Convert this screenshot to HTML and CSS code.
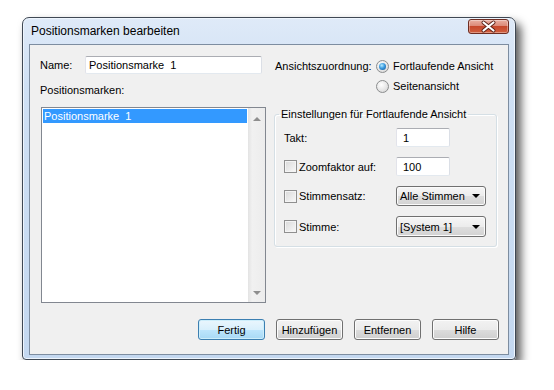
FILE: index.html
```html
<!DOCTYPE html>
<html>
<head>
  <title>Positionsmarken bearbeiten</title>
  <link rel="stylesheet" href="styles.css">
</head>
<body>
  <div class="window">
    <div class="titlebar">
      <span class="title">Positionsmarken bearbeiten</span>
      <div class="close">
        <svg width="41" height="15" viewBox="0 0 41 15">
          <path d="M15.5 3.5 L25.5 11.5 M25.5 3.5 L15.5 11.5" stroke="#5a1f15" stroke-width="4" stroke-linecap="round"/>
          <path d="M15.5 3.5 L25.5 11.5 M25.5 3.5 L15.5 11.5" stroke="#fff" stroke-width="2.2" stroke-linecap="round"/>
        </svg>
      </div>
    </div>

    <div class="client">
      <div class="main">
        <div class="left">
          <div class="name-row">
            <label class="name-label">Name:</label>
            <input class="textbox name-input" type="text" value="Positionsmarke  1">
          </div>
          <div class="list-label">Positionsmarken:</div>
          <div class="list">
            <div class="list-items">
              <div class="list-item selected">Positionsmarke  1</div>
            </div>
            <div class="scrollbar">
              <span class="arrow-up"></span>
              <span class="arrow-down"></span>
            </div>
          </div>
        </div>

        <div class="right">
          <div class="view-row">
            <span class="view-label">Ansichtszuordnung:</span>
            <div class="radios">
              <div class="radio-row"><span class="radio on"></span>Fortlaufende Ansicht</div>
              <div class="radio-row"><span class="radio"></span>Seitenansicht</div>
            </div>
          </div>

          <fieldset class="group">
            <legend>Einstellungen für Fortlaufende Ansicht</legend>
            <div class="field-row row-a">
              <span class="field-label">Takt:</span>
              <input class="textbox small-input" type="text" value="1">
            </div>
            <div class="field-row row-a">
              <span class="field-label"><span class="check"></span>Zoomfaktor auf:</span>
              <input class="textbox small-input" type="text" value="100">
            </div>
            <div class="field-row row-b">
              <span class="field-label"><span class="check"></span>Stimmensatz:</span>
              <div class="dropdown"><span>Alle Stimmen</span><span class="drop-arrow"></span></div>
            </div>
            <div class="field-row row-c">
              <span class="field-label"><span class="check"></span>Stimme:</span>
              <div class="dropdown"><span>[System 1]</span><span class="drop-arrow"></span></div>
            </div>
          </fieldset>
        </div>
      </div>

      <div class="buttons">
        <button class="btn default">Fertig</button>
        <button class="btn">Hinzufügen</button>
        <button class="btn">Entfernen</button>
        <button class="btn">Hilfe</button>
      </div>
    </div>
  </div>
</body>
</html>
```

FILE: styles.css
```css
body {
  margin: 0;
  background: #fff;
  font-family: "Liberation Sans", Arial, sans-serif;
  font-size: 11px;
  color: #000;
}

.window {
  margin: 17px 0 0 22px;
  width: 494px;
  height: 343px;
  box-sizing: border-box;
  border: 1px solid #3f4854;
  border-radius: 7px 7px 4px 4px;
  background: linear-gradient(#dfeaf8, #cfe0f4 20%, #c4d8f0);
  box-shadow: 5px 6px 10px rgba(0, 0, 0, 0.65), inset 0 0 0 1px #eef5fd;
  display: flex;
  flex-direction: column;
}

.titlebar {
  height: 26px;
  display: flex;
  padding: 0 6px 0 8px;
}

.title {
  font-size: 12px;
  line-height: 14px;
  margin-top: 6px;
}

.close {
  margin: 1px 0 0 auto;
  width: 41px;
  height: 15px;
  box-sizing: border-box;
  border: 1px solid #6e2d22;
  border-radius: 3px;
  background: linear-gradient(#eab0a2, #dc8a78 45%, #c7482c 50%, #d0603f);
  box-shadow: inset 0 0 0 1px rgba(255, 255, 255, 0.35);
}

.close svg {
  display: block;
  margin: -1px 0 0 -1px;
}

.client {
  flex: 1;
  margin: 0 6px 4px 6px;
  border: 1px solid #7d8da0;
  background: #f0f0f0;
  padding: 11px 9px 0 10px;
  display: flex;
  flex-direction: column;
}

.main {
  display: flex;
  gap: 8px;
}

.left {
  width: 226px;
}

.name-row {
  display: flex;
  align-items: center;
  height: 18px;
}

.name-label {
  width: 45px;
}

.textbox {
  box-sizing: border-box;
  border: 1px solid;
  border-color: #abadb3 #dbdfe6 #e3e9ef #e2e3ea;
  border-radius: 2px;
  background: #fff;
  font: inherit;
  color: #000;
  padding: 0 0 0 3px;
  margin: 0;
  outline: none;
}

.name-input {
  width: 177px;
  height: 18px;
}

.list-label {
  margin-top: 10px;
  line-height: 13px;
}

.list {
  margin: 10px 0 0 1px;
  width: 225px;
  height: 196px;
  box-sizing: border-box;
  border: 1px solid #828790;
  background: #fff;
  display: flex;
}

.list-items {
  flex: 1;
  padding: 1px;
}

.list-item {
  height: 14px;
  line-height: 14px;
  padding-left: 1px;
  white-space: pre;
}

.list-item.selected {
  background: #3399ff;
  color: #fff;
}

.scrollbar {
  width: 17px;
  background: linear-gradient(90deg, #e3e3e3, #f1f1f1 25%, #ececec);
  display: flex;
  flex-direction: column;
  align-items: center;
  justify-content: space-between;
  padding: 9px 0 7px;
  box-sizing: border-box;
}

.arrow-up {
  border-left: 4px solid transparent;
  border-right: 4px solid transparent;
  border-bottom: 4px solid #8e8e8e;
}

.arrow-down {
  border-left: 4px solid transparent;
  border-right: 4px solid transparent;
  border-top: 4px solid #8e8e8e;
}

.right {
  width: 223px;
}

.view-row {
  display: flex;
}

.view-label {
  width: 101px;
  padding-left: 1px;
  line-height: 20px;
}

.radio-row {
  display: flex;
  align-items: center;
  gap: 4px;
  height: 20px;
}

.radio {
  width: 13px;
  height: 13px;
  box-sizing: border-box;
  border-radius: 50%;
  border: 1px solid #8b8d8e;
  background: radial-gradient(circle at 40% 35%, #ffffff, #e6e6e6 55%, #cfcfcf);
  position: relative;
}

.radio.on::after {
  content: "";
  position: absolute;
  left: 2px;
  top: 2px;
  width: 7px;
  height: 7px;
  border-radius: 50%;
  background: radial-gradient(circle at 40% 35%, #b6ecff, #3b9be0 45%, #0f4f8e);
}

.group {
  margin: 11px 0 0 0;
  padding: 7px 0 9px 9px;
  width: 223px;
  box-sizing: border-box;
  border: 1px solid #d5dfe5;
  border-radius: 3px;
  box-shadow: inset 1px 1px 0 #fff, 1px 1px 0 #fff;
  display: flex;
  flex-direction: column;
  gap: 10px;
  min-width: 0;
}

.group legend {
  margin-left: -5px;
  padding: 0 2px;
  line-height: 14px;
}

.field-row {
  display: flex;
  align-items: center;
}

.row-a {
  height: 19px;
}

.row-b {
  height: 20px;
}

.row-c {
  height: 21px;
}

.field-label {
  width: 112px;
  display: flex;
  align-items: center;
  gap: 2px;
}

.check {
  width: 13px;
  height: 13px;
  box-sizing: border-box;
  border: 1px solid #8f8f8f;
  background: linear-gradient(135deg, #d9d9d9, #f9f9f9);
  box-shadow: inset 0 0 0 1px #f4f4f4;
}

.small-input {
  width: 54px;
  height: 19px;
  padding-left: 6px;
}

.dropdown {
  width: 90px;
  height: 100%;
  box-sizing: border-box;
  border: 1px solid #707070;
  border-radius: 3px;
  background: linear-gradient(#f6f6f6, #ececec 50%, #dedede 51%, #d2d2d2);
  box-shadow: inset 0 0 0 1px #fbfbfb;
  display: flex;
  align-items: center;
  justify-content: space-between;
  padding: 0 5px 0 3px;
}

.drop-arrow {
  border-left: 4px solid transparent;
  border-right: 4px solid transparent;
  border-top: 4px solid #000;
}

.buttons {
  display: flex;
  justify-content: flex-end;
  gap: 11px;
  margin-top: 16px;
}

.btn {
  width: 67px;
  height: 21px;
  box-sizing: border-box;
  border: 1px solid #707070;
  border-radius: 3px;
  background: linear-gradient(#f2f2f2, #ebebeb 50%, #dddddd 51%, #cfcfcf);
  box-shadow: inset 0 0 0 1px #fcfcfc;
  font: inherit;
  color: #000;
  padding: 0;
}

.btn.default {
  border-color: #3c7fb1;
  background: linear-gradient(#eaf6fd, #d9f0fc 50%, #bee6fd 51%, #a7d9f5);
  box-shadow: inset 0 0 0 1px #cdeefb;
}
```
